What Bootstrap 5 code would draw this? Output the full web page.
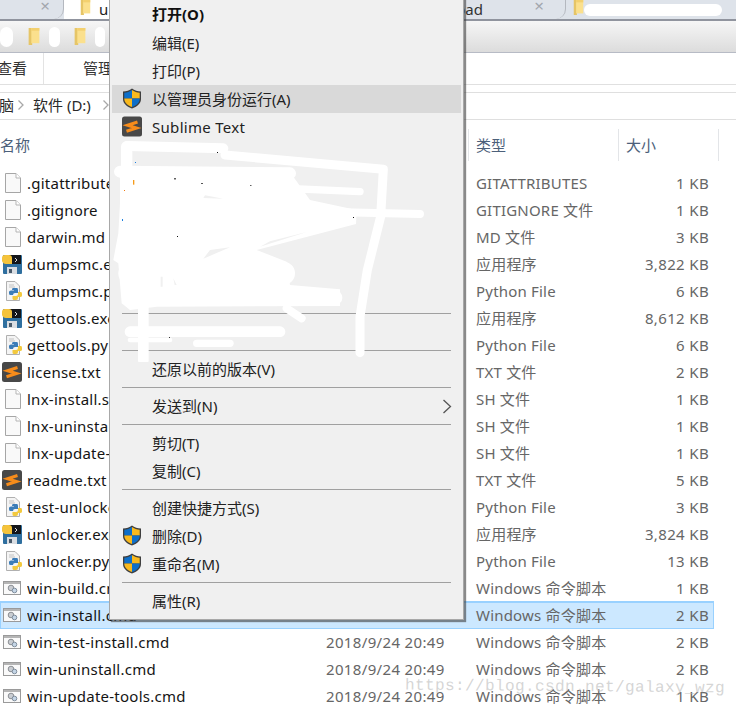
<!DOCTYPE html>
<html lang="zh-CN">
<head>
<meta charset="utf-8">
<title>Explorer</title>
<link rel="stylesheet" href="https://cdn.jsdelivr.net/npm/bootstrap@5.3.0/dist/css/bootstrap.min.css">
<style>
html,body{margin:0;background:#fff}
.xp{position:relative;width:736px;height:708px;overflow:hidden;background:#fff;font:15px/20px "Noto Sans","Noto Sans CJK SC",sans-serif;color:#1b1b1b}
.tabs{height:21px;background:#dee3ea;border-bottom:2px solid #90949e}
.tab-g{position:relative;flex:none;height:19px;overflow:hidden}
.tab-a{width:64px;color:#9aa0a8}
.tab-b{width:336px;background:#fff;padding-left:16px;color:#222}
.tab-c{width:166px;color:#333}
.tab-d{flex:1;padding-left:7px}
.tab-curve{position:absolute;right:0;top:0;width:10px;height:19px;border-right:1.5px solid #b4b8bf;border-radius:0 0 14px 0}
.tab-x{font-size:17px;line-height:11px;color:#a3a7ae;width:16px;text-align:center;flex:none}
.tab-xa{margin-right:11px}
.tab-xc{margin-left:48px;margin-right:19px}
.tab-txt{line-height:19px}
.blank{display:block;height:12px;background:#fff;border-radius:6px;margin-right:14px}
.folder{flex:none;display:block}
.bar2{height:32px;background:linear-gradient(#f6f6f6,#dcdcdc);border-bottom:1px solid #b7bbc5}
.blob{flex:none;height:20px;background:#fff;border-radius:7px}
.b1{width:13px}
.f1{margin-left:15px}
.b2{width:11px;margin-left:9px}
.f2{margin-left:14px}
.b3{width:10px;margin-left:9px}
.ribbon{height:32px;border-bottom:1px solid #e0e0e0;color:#333;line-height:31px}
.rib-a{width:47px;margin-left:-3px;border-right:1px solid #e3e3e3;height:31px;flex:none;margin-right:39px}
.addr{height:28px;margin-top:7px;padding-bottom:2px;border-top:1px solid #dfdfdf;border-bottom:1px solid #dfdfdf;color:#2a2a2a;overflow:hidden}
.crumb-first{margin-left:-16px;width:31px;flex:none}
.chev{flex:none;width:8px;height:12px}
.chev-a{margin-left:2px}
.crumb-d{margin-left:8px;margin-right:11px}
.head{height:50px;padding-top:9px;color:#4c607a}
.hcell{height:32px;line-height:32px;border-right:1px solid #e3e5e8;flex:none}
.h-name{width:469px}
.h-type{width:150px;padding-left:7px}
.h-size{width:100px;padding-left:7px}
.rowx{height:27px;width:714px;line-height:27px}
.rowx.sel{background:#cce8ff;box-shadow:inset 0 0 0 1px #99d1ff,0 -1px 0 #99d1ff}
.c-ico{width:27px;flex:none;height:27px;padding-left:2px}
.c-ico svg{display:block;width:20px;height:20px;margin-top:3px}
.c-name{width:299px;flex:none;color:#141414;white-space:nowrap;overflow:hidden;letter-spacing:.25px}
.c-date{width:150px;flex:none;color:#666;letter-spacing:.35px}
.c-type{width:150px;flex:none;color:#666;letter-spacing:.2px}
.c-size{width:83px;flex:none;color:#666;text-align:right;letter-spacing:.35px}
.menu-x{position:absolute;left:109px;top:-2px;width:355px;height:622px;padding:2px 2px 5px 2px;background:#f0f0f0;border:1px solid #a8a8a8;box-shadow:2px 2px 1px rgba(60,60,60,.6);color:#222}
.mi{height:28px;line-height:29px;position:relative;padding-left:40px;width:349px}
.mi.on{background:#d9d9d9}
.mi b{font-weight:700;color:#111;display:block;line-height:27px}
.mi svg.mic{position:absolute;left:10px;top:3px;width:20px;height:21px}
.mi svg.mch{position:absolute;right:9px;top:7px;width:10px;height:15px}
.subl-t{letter-spacing:.3px}
.mgap{height:168px}
.mline{height:1px;margin:4px 0 4px 10px;width:329px;background:#a0a0a0}
.mblank{height:28px}
.scrib{position:absolute;left:110px;top:130px;width:360px;height:232px;pointer-events:none}
.wm{position:absolute;left:405px;top:676px;font:16px/22px "Liberation Mono",monospace;letter-spacing:.4px;color:rgba(185,185,185,.6);transform:rotate(.5deg);white-space:nowrap}
</style>
</head>
<body>
<svg width="0" height="0" class="position-absolute">
<defs>
<symbol id="i-file" viewBox="0 0 20 20"><path d="M3.500 .5H14L18.500 5V19.500H3.500Z" fill="#f9f9f9" stroke="#a6a6a6"/><path d="M14 .5V5H18.500" fill="#fff" stroke="#b5b5b5"/></symbol>
<symbol id="i-exe" viewBox="0 0 20 20"><rect x="1" y="1" width="19" height="19" rx="1" fill="#2f6f9f"/><rect x="7" y="1" width="12" height="9" fill="#14161a"/><rect x="5" y="13" width="10" height="7" fill="#d9dde2"/><rect x="7" y="15" width="3" height="4" fill="#4a5a6a"/><path d="M0 4Q0 1 3 1H7Q10 1 10 4V10H4Q1 10 0 7Z" fill="#f5c33b"/><path d="M13 4l2 2-2 2" fill="none" stroke="#ddd"/></symbol>
<symbol id="i-py" viewBox="0 0 20 20"><path d="M4.500 .5H13L17.500 5V19.500H4.500Z" fill="#f4f4f4" stroke="#b0b0b0"/><path d="M7 4H12M7 6H13" stroke="#c2c2c2"/><path d="M11 7H15Q16 7 16 9V12H13Q11 12 11 14H8Q7 14 7 12V11Q7 9.500 9 9.500H12V9H10Q10 7 11 7Z" fill="#3b7cb8"/><path d="M17 11H19Q20 11 20 13V14.500Q20 16 18 16H16V17Q16 19 14 19H12Q10.500 19 10.500 17.500V15H14Q16 15 16 13V11Z" fill="#f3c93d"/></symbol>
<symbol id="i-subl" viewBox="0 0 20 20"><rect x="0" y="0" width="20" height="20" rx="2.500" fill="#484848"/><path d="M15.500 5.500 5.500 8.700 14.500 11.500 4.500 14.700" fill="none" stroke="#f78c1b" stroke-width="3"/></symbol>
<symbol id="i-cmd" viewBox="0 0 20 20"><rect x="1.500" y="3.500" width="17" height="13" fill="#fafafa" stroke="#9a9a9a"/><rect x="2" y="4" width="16" height="2" fill="#b5b5b5"/><circle cx="9" cy="10" r="2.800" fill="#c9cdd2" stroke="#8c8f94"/><circle cx="12.500" cy="12.500" r="2.300" fill="#c4d5e6" stroke="#7f8d9c"/></symbol>
<symbol id="i-shield" viewBox="0 0 20 21"><path d="M10 .5C7.500 2.500 4.500 3.500 1 3.500V11C1 15.500 5 18.800 10 20.500 15 18.800 19 15.500 19 11V3.500C15.500 3.500 12.500 2.500 10 .5Z" fill="#3f3f3f"/><path d="M10 2V10.500H2.300V4.700C5 4.600 7.800 3.700 10 2Z" fill="#0e6fc9"/><path d="M10 2V10.500H17.700V4.700C15 4.600 12.200 3.700 10 2Z" fill="#f9b91d"/><path d="M2.300 10.500H10V19C6 17.600 2.600 15 2.300 11Z" fill="#f9b91d"/><path d="M17.700 10.500H10V19C14 17.600 17.400 15 17.700 11Z" fill="#0e6fc9"/></symbol>
<symbol id="i-folder" viewBox="0 0 12 19"><rect x="0" y="0" width="4" height="19" fill="#e6c567"/><rect x="3" y="0" width="9" height="17" fill="#fbe08d"/><rect x="3" y="0" width="9" height="3" fill="#f3d06f"/></symbol>
</defs>
</svg>

<div class="xp">
  <div class="tabs d-flex">
    <div class="tab-g tab-a d-flex justify-content-end"><span class="tab-x tab-xa">×</span><span class="tab-curve"></span></div>
    <div class="tab-g tab-b d-flex gap-2"><svg class="folder" width="11" height="15"><use href="#i-folder"/></svg><span class="tab-txt">u</span></div>
    <div class="tab-g tab-c d-flex justify-content-end"><span class="tab-txt">Download</span><span class="tab-x tab-xc">×</span><span class="tab-curve"></span></div>
    <div class="tab-g tab-d d-flex"><svg class="folder" width="11" height="15"><use href="#i-folder"/></svg><span class="blank flex-grow-1 mt-1"></span></div>
  </div>
  <div class="bar2 d-flex align-items-center">
    <span class="blob b1"></span>
    <svg class="folder f1" width="12" height="17"><use href="#i-folder"/></svg>
    <span class="blob b2"></span>
    <svg class="folder f2" width="12" height="17"><use href="#i-folder"/></svg>
    <span class="blob b3"></span>
  </div>
  <div class="ribbon d-flex"><div class="rib-a">查看</div><div>管理</div></div>
  <div class="addr d-flex align-items-center">
    <span class="crumb-first text-nowrap">电脑</span>
    <svg class="chev chev-a" viewBox="0 0 8 12"><path d="M1.500 1.500 6 6 1.500 10.500" fill="none" stroke="#a8a8a8" stroke-width="1.300"/></svg>
    <span class="crumb-d">软件 (D:)</span>
    <svg class="chev" viewBox="0 0 8 12"><path d="M1.500 1.500 6 6 1.500 10.500" fill="none" stroke="#a8a8a8" stroke-width="1.300"/></svg>
  </div>
  <div class="head d-flex">
    <div class="hcell h-name">名称</div>
    <div class="hcell h-type">类型</div>
    <div class="hcell h-size">大小</div>
  </div>

  <div class="rowx d-flex"><div class="c-ico"><svg><use href="#i-file"/></svg></div><div class="c-name">.gitattributes</div><div class="c-date"></div><div class="c-type">GITATTRIBUTES</div><div class="c-size">1 KB</div></div>
  <div class="rowx d-flex"><div class="c-ico"><svg><use href="#i-file"/></svg></div><div class="c-name">.gitignore</div><div class="c-date"></div><div class="c-type">GITIGNORE 文件</div><div class="c-size">1 KB</div></div>
  <div class="rowx d-flex"><div class="c-ico"><svg><use href="#i-file"/></svg></div><div class="c-name">darwin.md</div><div class="c-date"></div><div class="c-type">MD 文件</div><div class="c-size">3 KB</div></div>
  <div class="rowx d-flex"><div class="c-ico"><svg><use href="#i-exe"/></svg></div><div class="c-name">dumpsmc.exe</div><div class="c-date"></div><div class="c-type">应用程序</div><div class="c-size">3,822 KB</div></div>
  <div class="rowx d-flex"><div class="c-ico"><svg><use href="#i-py"/></svg></div><div class="c-name">dumpsmc.py</div><div class="c-date"></div><div class="c-type">Python File</div><div class="c-size">6 KB</div></div>
  <div class="rowx d-flex"><div class="c-ico"><svg><use href="#i-exe"/></svg></div><div class="c-name">gettools.exe</div><div class="c-date"></div><div class="c-type">应用程序</div><div class="c-size">8,612 KB</div></div>
  <div class="rowx d-flex"><div class="c-ico"><svg><use href="#i-py"/></svg></div><div class="c-name">gettools.py</div><div class="c-date"></div><div class="c-type">Python File</div><div class="c-size">6 KB</div></div>
  <div class="rowx d-flex"><div class="c-ico"><svg><use href="#i-subl"/></svg></div><div class="c-name">license.txt</div><div class="c-date"></div><div class="c-type">TXT 文件</div><div class="c-size">2 KB</div></div>
  <div class="rowx d-flex"><div class="c-ico"><svg><use href="#i-file"/></svg></div><div class="c-name">lnx-install.sh</div><div class="c-date"></div><div class="c-type">SH 文件</div><div class="c-size">1 KB</div></div>
  <div class="rowx d-flex"><div class="c-ico"><svg><use href="#i-file"/></svg></div><div class="c-name">lnx-uninstall.sh</div><div class="c-date"></div><div class="c-type">SH 文件</div><div class="c-size">1 KB</div></div>
  <div class="rowx d-flex"><div class="c-ico"><svg><use href="#i-file"/></svg></div><div class="c-name">lnx-update-tools.sh</div><div class="c-date"></div><div class="c-type">SH 文件</div><div class="c-size">1 KB</div></div>
  <div class="rowx d-flex"><div class="c-ico"><svg><use href="#i-subl"/></svg></div><div class="c-name">readme.txt</div><div class="c-date"></div><div class="c-type">TXT 文件</div><div class="c-size">5 KB</div></div>
  <div class="rowx d-flex"><div class="c-ico"><svg><use href="#i-py"/></svg></div><div class="c-name">test-unlocker.py</div><div class="c-date"></div><div class="c-type">Python File</div><div class="c-size">3 KB</div></div>
  <div class="rowx d-flex"><div class="c-ico"><svg><use href="#i-exe"/></svg></div><div class="c-name">unlocker.exe</div><div class="c-date"></div><div class="c-type">应用程序</div><div class="c-size">3,824 KB</div></div>
  <div class="rowx d-flex"><div class="c-ico"><svg><use href="#i-py"/></svg></div><div class="c-name">unlocker.py</div><div class="c-date"></div><div class="c-type">Python File</div><div class="c-size">13 KB</div></div>
  <div class="rowx d-flex"><div class="c-ico"><svg><use href="#i-cmd"/></svg></div><div class="c-name">win-build.cmd</div><div class="c-date"></div><div class="c-type">Windows 命令脚本</div><div class="c-size">1 KB</div></div>
  <div class="rowx sel d-flex"><div class="c-ico"><svg><use href="#i-cmd"/></svg></div><div class="c-name">win-install.cmd</div><div class="c-date"></div><div class="c-type">Windows 命令脚本</div><div class="c-size">2 KB</div></div>
  <div class="rowx d-flex"><div class="c-ico"><svg><use href="#i-cmd"/></svg></div><div class="c-name">win-test-install.cmd</div><div class="c-date">2018/9/24 20:49</div><div class="c-type">Windows 命令脚本</div><div class="c-size">2 KB</div></div>
  <div class="rowx d-flex"><div class="c-ico"><svg><use href="#i-cmd"/></svg></div><div class="c-name">win-uninstall.cmd</div><div class="c-date">2018/9/24 20:49</div><div class="c-type">Windows 命令脚本</div><div class="c-size">2 KB</div></div>
  <div class="rowx d-flex"><div class="c-ico"><svg><use href="#i-cmd"/></svg></div><div class="c-name">win-update-tools.cmd</div><div class="c-date">2018/9/24 20:49</div><div class="c-type">Windows 命令脚本</div><div class="c-size">1 KB</div></div>

  <div class="menu-x">
    <div class="mi"><b>打开(O)</b></div>
    <div class="mi">编辑(E)</div>
    <div class="mi">打印(P)</div>
    <div class="mi on"><svg class="mic"><use href="#i-shield"/></svg>以管理员身份运行(A)</div>
    <div class="mi"><svg class="mic"><use href="#i-subl"/></svg><span class="subl-t">Sublime Text</span></div>
    <div class="mgap"></div>
    <div class="mline"></div>
    <div class="mblank"></div>
    <div class="mline"></div>
    <div class="mi">还原以前的版本(V)</div>
    <div class="mline"></div>
    <div class="mi">发送到(N)<svg class="mch" viewBox="0 0 10 15"><path d="M1.500 1 8.500 7.500 1.500 14" fill="none" stroke="#555" stroke-width="1.300"/></svg></div>
    <div class="mline"></div>
    <div class="mi">剪切(T)</div>
    <div class="mi">复制(C)</div>
    <div class="mline"></div>
    <div class="mi">创建快捷方式(S)</div>
    <div class="mi"><svg class="mic"><use href="#i-shield"/></svg>删除(D)</div>
    <div class="mi"><svg class="mic"><use href="#i-shield"/></svg>重命名(M)</div>
    <div class="mline"></div>
    <div class="mi">属性(R)</div>
  </div>

  <svg class="scrib" viewBox="0 0 1080 696">
    <g fill="none" stroke="#fff" stroke-linecap="round" stroke-linejoin="round">
      <path d="M52 48 340 55" stroke-width="30"/>
      <path d="M345 75 820 118 812 260 772 420 750 560 750 668" stroke-width="27"/>
      <path d="M30 125 540 130" stroke-width="36"/>
      <path d="M50 50V130" stroke-width="34"/>
      <path d="M300 165 750 185" stroke-width="22"/>
      <path d="M50 232 930 252" stroke-width="24"/>
      <path d="M100 520V690" stroke-width="32"/>
      <path d="M530 535 575 565" stroke-width="24"/>
      <path d="M60 605H510" stroke-width="32"/>
      <path d="M260 640H360" stroke-width="22"/>
      <path d="M60 630H180" stroke-width="14"/>
      <path d="M150 503H675" stroke-width="44"/>
      <path d="M60 430H520" stroke-width="70"/>
    </g>
    <path d="M30 130 550 140 600 210 740 240 738 282 440 360 530 395 540 465 690 478 690 528 140 530 60 540 35 520 25 400 10 390 25 310 30 220Z" fill="#fff"/>
    <path d="M285 196 340 206 280 204ZM480 334 590 306 450 350ZM152 440h6v30h-6zM190 445l10 20-6 0zM300 360 360 352 280 386Z" fill="#f0f0f0"/>
    <g>
      <rect x="321" y="66" width="3" height="3" fill="#111"/><rect x="192" y="145" width="6" height="3" fill="#111"/><rect x="273" y="159" width="6" height="3" fill="#555"/><rect x="421" y="165" width="3" height="3" fill="#111"/><rect x="729" y="261" width="3" height="3" fill="#111"/><rect x="201" y="318" width="3" height="3" fill="#111"/><rect x="177" y="621" width="3" height="3" fill="#333"/><rect x="75" y="96" width="3" height="3" fill="#1a7fe0"/><rect x="36" y="267" width="3" height="6" fill="#1a7fe0"/><rect x="69" y="150" width="4" height="14" fill="#f59b1c"/><rect x="42" y="180" width="3" height="3" fill="#f07a10"/>
    </g>
  </svg>

  <div class="wm">https://blog.csdn.net/galaxy_wzg</div>
</div>
<script src="https://cdn.jsdelivr.net/npm/bootstrap@5.3.0/dist/js/bootstrap.bundle.min.js"></script>
</body>
</html>
